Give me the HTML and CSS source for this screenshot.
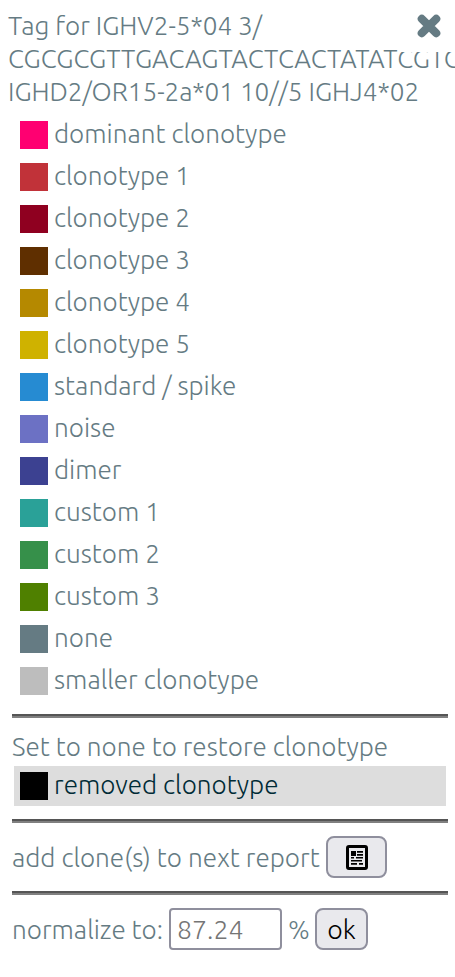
FILE: index.html
```html
<!DOCTYPE html>
<html lang="en">
<head>
<meta charset="utf-8">
<title>Tag selector</title>
<link rel="stylesheet" href="styles.css">
</head>
<body>
<div class="tag-selector">
  <button class="close" aria-label="Close"><svg width="24" height="24" viewBox="0 0 24 24"><path d="M4.8 4.8 19.2 19.2M19.2 4.8 4.8 19.2"/></svg></button>
  <div class="title">
    <div>Tag for IGHV2-5*04 3/</div>
    <div>CGCGCGTTGACAGTACTCACTATATCGTC</div>
    <div>IGHD2/OR15-2a*01 10//5 IGHJ4*02</div>
  </div>
  <ul class="tags">
    <li><i class="swatch c0"></i><span>dominant clonotype</span></li>
    <li><i class="swatch c1"></i><span>clonotype 1</span></li>
    <li><i class="swatch c2"></i><span>clonotype 2</span></li>
    <li><i class="swatch c3"></i><span>clonotype 3</span></li>
    <li><i class="swatch c4"></i><span>clonotype 4</span></li>
    <li><i class="swatch c5"></i><span>clonotype 5</span></li>
    <li><i class="swatch c6"></i><span>standard / spike</span></li>
    <li><i class="swatch c7"></i><span>noise</span></li>
    <li><i class="swatch c8"></i><span>dimer</span></li>
    <li><i class="swatch c9"></i><span>custom 1</span></li>
    <li><i class="swatch c10"></i><span>custom 2</span></li>
    <li><i class="swatch c11"></i><span>custom 3</span></li>
    <li><i class="swatch c12"></i><span>none</span></li>
    <li><i class="swatch c13"></i><span>smaller clonotype</span></li>
  </ul>
  <div class="rule"></div>
  <div class="hint">Set to none to restore clonotype</div>
  <div class="removed"><i class="swatch c14"></i><span>removed clonotype</span></div>
  <div class="rule"></div>
  <div class="row report">
    <span class="label report-label">add clone(s) to next report</span>
    <button class="btn icon-btn" aria-label="Add to report"><svg width="22" height="25" viewBox="0 0 22 25"><rect class="frame" x="1.5" y="1.5" width="19" height="22" rx="1.5"/><path class="ink" d="M5 6h5v5h-5zM11 6h6v1.7h-6zM11 9h6v1.7h-6zM5 12h3v1.5h-3zM10 12h7v1.5h-7zM5 15h11v1.5h-11zM5 18h6v1.7h-6zM13 18h4v1.7h-4z"/></svg></button>
  </div>
  <div class="rule"></div>
  <div class="row normalize">
    <span class="label norm-label">normalize to:</span>
    <input class="value" type="text" placeholder="87.24" aria-label="Normalize to">
    <span class="percent">%</span>
    <button class="btn ok">ok</button>
  </div>
</div>
</body>
</html>
```
FILE: styles.css
```css
* { box-sizing: border-box; }
body {
  margin: 0;
  background: #fff;
  color: #657b83;
  font: 300 26.08px/33px Ubuntu, "Open Sans", "Noto Sans", sans-serif;
  overflow: hidden;
}
.tag-selector { position: relative; width: 455px; height: 977px; overflow: hidden; white-space: nowrap; }
.close {
  position: absolute; top: 0; right: 0; z-index: 1;
  width: 57px; height: 52px; padding: 0 0 0 5px;
  display: flex; align-items: center; justify-content: center;
  border: 0; background: #fff;
}
.close path { stroke: #657b83; stroke-width: 8.2; stroke-linecap: round; }
.title { padding: 9px 0 0 8px; }
.tags { list-style: none; margin: 6px 0 0; padding: 0 0 0 20px; }
.tags li { display: flex; align-items: center; height: 42px; }
.tags span { margin-top: -3px; }
.swatch { width: 28px; height: 28px; margin-right: 6px; flex: none; }
.c0 { background: #ff0071; }
.c1 { background: #c13239; }
.c2 { background: #8f0020; }
.c3 { background: #5f2f00; }
.c4 { background: #b58900; }
.c5 { background: #cfb200; }
.c6 { background: #268bd2; }
.c7 { background: #6c71c4; }
.c8 { background: #3c4191; }
.c9 { background: #2aa198; }
.c10 { background: #36904a; }
.c11 { background: #4f8000; }
.c12 { background: #657b83; }
.c13 { background: #bdbdbd; }
.c14 { background: #000; }
.rule { height: 4px; margin: 0 7px 0 12px; border-top: 2px solid #555; border-bottom: 2px solid #808080; }
.tags + .rule { margin-top: 12px; }
.hint { margin: 12px 0 0 12px; height: 36px; }
.removed {
  display: flex; align-items: center;
  height: 40px; margin: 0 9px 13px 14px; padding-left: 6px;
  background: #ddd; color: #002b36;
}
.removed span { margin-top: -3px; }
.row { display: flex; align-items: center; height: 42px; padding-left: 12px; }
.report { margin: 13px 0; }
.normalize { margin-top: 13px; }
.label { flex: none; }
.report-label { width: 314px; }
.norm-label { width: 157px; }
.btn {
  height: 42px; padding: 0; border: 2px solid #8f8f9d; border-radius: 8px;
  background: #e9e9ed; color: #000; font: inherit;
  display: flex; align-items: center; justify-content: center;
}
.icon-btn { width: 61px; }
.icon-btn .frame { fill: none; stroke: #000; stroke-width: 3; }
.icon-btn .ink { fill: #000; }
.value {
  width: 113px; height: 42px; padding: 0 0 0 6px; border: 2px solid #8f8f9d; border-radius: 4px;
  background: #fff; font: inherit; font-size: 26.67px;
}
.value::placeholder { color: #757575; opacity: 1; }
.percent { width: 33px; padding-left: 6px; }
.ok { width: 53px; font-size: 26.67px; }
```
